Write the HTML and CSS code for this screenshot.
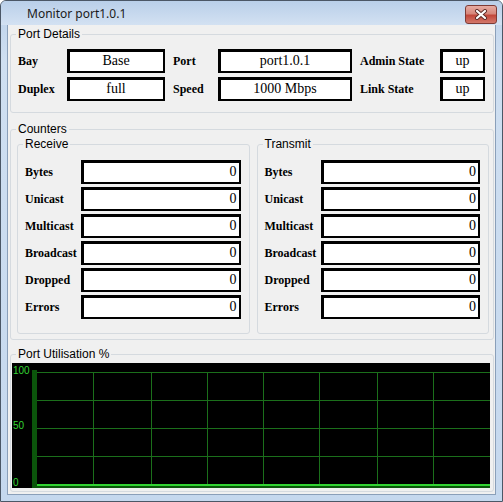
FILE: index.html
```html
<!DOCTYPE html>
<html lang="en">
<head>
    <meta charset="UTF-8">
    <title>Monitor port1.0.1</title>
    <link rel="stylesheet" href="styles.css">
</head>
<body>
<div class="window">
    <div class="titlebar">
        <span class="title">Monitor port1.0.1</span>
        <button class="close" title="Close">
            <svg width="14" height="11" viewBox="0 0 14 11">
                <path d="M3 2 L11 9 M11 2 L3 9" stroke="#5a2a26" stroke-width="4" stroke-linecap="round"/>
                <path d="M3 2 L11 9 M11 2 L3 9" stroke="#fff" stroke-width="2.2" stroke-linecap="round"/>
            </svg>
        </button>
    </div>

    <div class="client">
        <fieldset class="group details">
            <legend>Port Details</legend>
            <div class="details-grid">
                <span class="lbl">Bay</span><span class="val">Base</span>
                <span class="lbl pad">Port</span><span class="val">port1.0.1</span>
                <span class="lbl pad">Admin State</span><span class="val">up</span>
                <span class="lbl">Duplex</span><span class="val">full</span>
                <span class="lbl pad">Speed</span><span class="val">1000 Mbps</span>
                <span class="lbl pad">Link State</span><span class="val">up</span>
            </div>
        </fieldset>

        <fieldset class="group counters">
            <legend>Counters</legend>
            <div class="counter-cols">
                <fieldset class="group sub">
                    <legend>Receive</legend>
                    <div class="crow"><span class="lbl">Bytes</span><span class="val num">0</span></div>
                    <div class="crow"><span class="lbl">Unicast</span><span class="val num">0</span></div>
                    <div class="crow"><span class="lbl">Multicast</span><span class="val num">0</span></div>
                    <div class="crow"><span class="lbl">Broadcast</span><span class="val num">0</span></div>
                    <div class="crow"><span class="lbl">Dropped</span><span class="val num">0</span></div>
                    <div class="crow"><span class="lbl">Errors</span><span class="val num">0</span></div>
                </fieldset>
                <fieldset class="group sub">
                    <legend>Transmit</legend>
                    <div class="crow"><span class="lbl">Bytes</span><span class="val num">0</span></div>
                    <div class="crow"><span class="lbl">Unicast</span><span class="val num">0</span></div>
                    <div class="crow"><span class="lbl">Multicast</span><span class="val num">0</span></div>
                    <div class="crow"><span class="lbl">Broadcast</span><span class="val num">0</span></div>
                    <div class="crow"><span class="lbl">Dropped</span><span class="val num">0</span></div>
                    <div class="crow"><span class="lbl">Errors</span><span class="val num">0</span></div>
                </fieldset>
            </div>
        </fieldset>

        <fieldset class="group util">
            <legend>Port Utilisation %</legend>
            <svg class="chart" width="478" height="125" viewBox="0 0 478 125">
                <rect width="478" height="125" fill="#000"/>
                <g stroke="#1b6f1b" stroke-width="1">
                    <line x1="25" y1="9.5" x2="478" y2="9.5"/>
                    <line x1="25" y1="37.5" x2="478" y2="37.5"/>
                    <line x1="25" y1="65.5" x2="478" y2="65.5"/>
                    <line x1="25" y1="93.5" x2="478" y2="93.5"/>
                    <line x1="81.5" y1="9" x2="81.5" y2="121"/>
                    <line x1="139.5" y1="9" x2="139.5" y2="121"/>
                    <line x1="195.5" y1="9" x2="195.5" y2="121"/>
                    <line x1="251.5" y1="9" x2="251.5" y2="121"/>
                    <line x1="307.5" y1="9" x2="307.5" y2="121"/>
                    <line x1="365.5" y1="9" x2="365.5" y2="121"/>
                    <line x1="421.5" y1="9" x2="421.5" y2="121"/>
                </g>
                <rect x="20" y="7" width="5" height="118" fill="#0b550b"/>
                <rect x="20" y="121" width="458" height="4" fill="#0b550b"/>
                <rect x="25" y="121" width="453" height="2" fill="#33d433"/>
                <g class="axis-text">
                    <text x="1" y="11">100</text>
                    <text x="1" y="66">50</text>
                    <text x="1" y="123">0</text>
                </g>
            </svg>
        </fieldset>
    </div>
</div>
</body>
</html>
```

FILE: styles.css
```css
html, body {
    margin: 0;
    padding: 0;
    background: #fff;
}
.window {
    width: 503px;
    height: 502px;
    box-sizing: border-box;
    border: 1px solid #4b5766;
    border-radius: 6px 6px 0 0;
    padding: 0 6px 6px 6px;
    background: linear-gradient(#bcd1ea, #cfdff1 60px, #c5d8ee);
    display: flex;
    flex-direction: column;
}
.titlebar {
    height: 24px;
    margin: 0 -6px;
    display: flex;
    align-items: center;
    padding-left: 26px;
    background: linear-gradient(#b9cfe9, #d3e1f2);
    border-radius: 5px 5px 0 0;
}
.title {
    flex: 1;
    font-family: "Noto Sans", sans-serif;
    font-size: 12px;
    color: #1a1a1a;
}
.close {
    width: 32px;
    height: 19px;
    margin: 3px 5px 0 0;
    padding: 0;
    border: 1px solid #7e3b35;
    border-radius: 3px;
    background: linear-gradient(#e6aca3, #d7877b 45%, #c2473a 55%, #d3786b);
    display: flex;
    align-items: center;
    justify-content: center;
}

.client {
    flex: 1;
    background: #f0f0f0;
    border: 1px solid #8a9fb9;
    border-top: none;
    padding: 2px 1px 0 2px;
    display: flex;
    flex-direction: column;
}

/* group boxes */
.group {
    margin: 0;
    min-width: 0;
    border: 1px solid #d5dadf;
    border-radius: 3px;
}
.group legend {
    font-family: "Liberation Sans", Arial, sans-serif;
    font-size: 12px;
    line-height: 14px;
    color: #000;
    padding: 0 2px;
}
.details {
    padding: 8px 8px 11px 7px;
}
.details legend {
    margin-left: -2px;
}
.counters {
    margin-top: 9px;
    padding: 1px 4px 5px 6px;
}
.counters legend {
    margin-left: -1px;
}
.util {
    margin-top: 7px;
    padding: 2px 2px 3px 1px;
}
.util legend {
    margin-left: 4px;
}
.sub {
    flex: 1;
    padding: 9px 8px 14px 7px;
}
.sub legend {
    margin-left: -2px;
}

/* fields */
.lbl {
    font-family: "Liberation Serif", "Times New Roman", serif;
    font-weight: bold;
    font-size: 12px;
    color: #000;
    white-space: nowrap;
}
.val {
    box-sizing: border-box;
    height: 24px;
    background: #fff;
    border: 2px solid #000;
    box-shadow: inset 1px 1px 0 #000;
    font-family: "Liberation Serif", "Times New Roman", serif;
    font-size: 14px;
    line-height: 20px;
    text-align: center;
    color: #000;
}
.val.num {
    text-align: right;
    padding-right: 2px;
}

.details-grid {
    display: grid;
    grid-template-columns: 49px 98px 53px 134px 88px 45px;
    grid-auto-rows: 24px;
    row-gap: 4px;
    align-items: center;
}
.details-grid .pad {
    padding-left: 8px;
}

.counter-cols {
    display: flex;
    gap: 7px;
}
.crow {
    display: flex;
    align-items: center;
    height: 24px;
    margin-bottom: 3px;
}
.crow:last-of-type {
    margin-bottom: 0;
}
.crow .lbl {
    width: 56px;
    flex: none;
}
.crow .val {
    flex: 1;
}

/* chart */
.chart {
    display: block;
}
.axis-text {
    font-family: "Liberation Sans", Arial, sans-serif;
    font-size: 10px;
    fill: #33d433;
}
```
